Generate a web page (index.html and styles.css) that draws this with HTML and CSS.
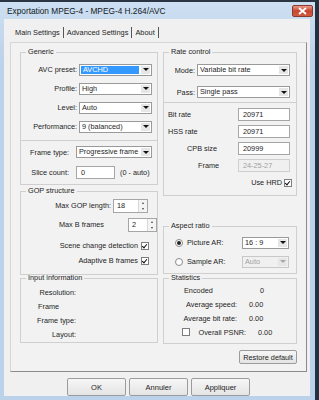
FILE: index.html
```html
<!DOCTYPE html>
<html lang="fr">
    <head>
        <meta charset="utf-8" />
        <title>Exportation MPEG-4</title>
        <link rel="stylesheet" href="styles.css">
    </head>
    <body>
        <div class="window">
            <div class="titlebar">
                <span class="title">Exportation MPEG-4 - MPEG-4 H.264/AVC</span>
                <span class="close">
                    <svg width="9" height="8" viewBox="0 0 9 8"><path d="M1 1L8 7M8 1L1 7" stroke="#fff" stroke-width="1.8"/></svg>
                </span>
            </div>
            <div class="client">
                <div class="tabs">
                    <span class="tab active">Main Settings</span>
                    <span class="tab">Advanced Settings</span>
                    <span class="tab">About</span>
                </div>
                <div class="pane">
                    <div class="cols">
                        <!-- left column -->
                        <div class="col">
                            <fieldset class="group g-generic">
                                <legend>Generic</legend>
                                <div class="row"><span class="lbl w56">AVC preset:</span><div class="combo w73 hl"><span class="val">AVCHD</span><span class="arrow"></span></div></div>
                                <div class="row"><span class="lbl w56">Profile:</span><div class="combo w73"><span class="val">High</span><span class="arrow"></span></div></div>
                                <div class="row"><span class="lbl w56">Level:</span><div class="combo w73"><span class="val">Auto</span><span class="arrow"></span></div></div>
                                <div class="row"><span class="lbl w56">Performance:</span><div class="combo w73"><span class="val">9 (balanced)</span><span class="arrow"></span></div></div>
                            </fieldset>
                            <div class="box g-frame">
                                <div class="row r20"><span class="lbl">Frame type:</span><div class="combo w75"><span class="val">Progressive frame</span><span class="arrow"></span></div></div>
                                <div class="row r20"><span class="lbl">Slice count:</span><div class="edit w39">0</div><span class="hint">(0 - auto)</span></div>
                            </div>
                            <fieldset class="group g-gop">
                                <legend>GOP structure</legend>
                                <div class="row"><span class="lbl w89">Max GOP length:</span><div class="spin"><span class="val">18</span><span class="updown"><i class="up"></i><i class="down"></i></span></div></div>
                                <div class="row"><span class="lbl w65">Max B frames</span><span class="fill"></span><div class="spin"><span class="val">2</span><span class="updown"><i class="up"></i><i class="down"></i></span></div></div>
                                <div class="row r15 first-check"><span class="lbl w114">Scene change detection</span><span class="check on"></span></div>
                                <div class="row r15"><span class="lbl w114">Adaptive B frames</span><span class="check on"></span></div>
                            </fieldset>
                            <fieldset class="group g-input">
                                <legend>Input information</legend>
                                <div class="row r14"><span class="lbl w57">Resolution:</span></div>
                                <div class="row r14"><span class="lbl w57 left">Frame</span></div>
                                <div class="row r14"><span class="lbl w57 wide">Frame type:</span></div>
                                <div class="row r14"><span class="lbl w57">Layout:</span></div>
                            </fieldset>
                        </div>

                        <!-- right column -->
                        <div class="col">
                            <fieldset class="group g-rate">
                                <legend>Rate control</legend>
                                <div class="row r20"><span class="lbl w33">Mode:</span><div class="combo w93"><span class="val">Variable bit rate</span><span class="arrow"></span></div></div>
                                <div class="row r20 gap2"><span class="lbl w33">Pass:</span><div class="combo w93"><span class="val">Single pass</span><span class="arrow"></span></div></div>
                            </fieldset>
                            <div class="box g-bits">
                                <div class="row r17"><span class="lbl plain p5">Bit rate</span><div class="edit w52">20971</div></div>
                                <div class="row r17"><span class="lbl plain p5">HSS rate</span><div class="edit w52">20971</div></div>
                                <div class="row r17"><span class="lbl plain p24">CPB size</span><div class="edit w52">20999</div></div>
                                <div class="row r17"><span class="lbl plain p35">Frame</span><div class="edit w52 off">24-25-27</div></div>
                                <div class="row r17 end"><span class="lbl plain">Use HRD</span><span class="check on"></span></div>
                            </div>
                            <fieldset class="group g-aspect">
                                <legend>Aspect ratio</legend>
                                <div class="row r19"><span class="radio on"></span><span class="lbl plain rlbl">Picture AR:</span><div class="combo w47"><span class="val">16 : 9</span><span class="arrow"></span></div></div>
                                <div class="row r19"><span class="radio"></span><span class="lbl plain rlbl">Sample AR:</span><div class="combo w47 off"><span class="val">Auto</span><span class="arrow"></span></div></div>
                            </fieldset>
                            <fieldset class="group g-stats">
                                <legend>Statistics</legend>
                                <div class="row r14"><span class="lbl plain p20 w66l">Encoded</span><span class="num">0</span></div>
                                <div class="row r14"><span class="lbl w75">Average speed:</span><span class="num">0.00</span></div>
                                <div class="row r14"><span class="lbl w75">Average bit rate:</span><span class="num">0.00</span></div>
                                <div class="row r14"><span class="check psnr"></span><span class="lbl w57 psnr-l">Overall PSNR:</span><span class="num">0.00</span></div>
                            </fieldset>
                        </div>
                    </div>
                    <div class="pane-foot">
                        <span class="btn restore">Restore default</span>
                    </div>
                </div>
                <div class="buttons">
                    <span class="btn dlg">OK</span>
                    <span class="btn dlg">Annuler</span>
                    <span class="btn dlg">Appliquer</span>
                </div>
            </div>
        </div>
    </body>
</html>
```

FILE: styles.css
```css
body {
    margin: 0;
    background: #22313f;
    font-family: "Liberation Sans", Arial, sans-serif;
    font-size: 7.3px;
    color: #1e1e1e;
}
.window {
    width: 315px;
    height: 400px;
    box-sizing: border-box;
    display: flex;
    flex-direction: column;
    padding: 0 5px 4px 4px;
    border-top: 2px solid #2a3542;
    background: linear-gradient(#cddff2, #bcd2ea 60px, #bcd2ea);
}
.titlebar {
    height: 17px;
    display: flex;
    align-items: center;
    justify-content: space-between;
    padding: 0 0 0 3px;
}
.title {
    font-size: 8.3px;
    color: #101820;
}
.close {
    width: 21px;
    height: 12px;
    margin-right: -3px;
    display: flex;
    align-items: center;
    justify-content: center;
    border: 1px solid #8a3b30;
    border-radius: 2px;
    background: linear-gradient(#e99a8c, #c8442e 50%, #d05a40);
    box-sizing: border-box;
}
.client {
    flex: 1;
    display: flex;
    flex-direction: column;
    background: #f0f0f0;
    padding: 0 3px 0 6px;
    min-height: 0;
    overflow: hidden;
}

/* tabs */
.tabs {
    height: 23px;
    display: flex;
    align-items: center;
    padding-left: 5px;
    padding-top: 4px;
    box-sizing: border-box;
}
.tab {
    padding: 0 3px;
    border-right: 1px solid #555;
    line-height: 11px;
    font-size: 7.4px;
}
.tab:first-child {
    padding-left: 0;
}

.pane {
    flex: 1;
    border: 1px solid #8c8c8c;
    border-left-color: #d6d6d6;
    border-top-color: #d6d6d6;
    background: #f2f2f2;
    padding: 0 9px;
    display: flex;
    flex-direction: column;
}
.cols {
    display: flex;
    gap: 5px;
}
.col {
    display: flex;
    flex-direction: column;
}
.col:first-child {
    width: 138px;
}
.col:last-child {
    width: 135px;
}

/* group boxes */
.group, .box {
    margin: 0;
    padding: 0;
    border: 1px solid #cfcfcf;
    box-sizing: border-box;
    min-width: 0;
}
.group > legend {
    margin-left: 5px;
    padding: 0 2px;
    line-height: 10px;
}
.g-generic { margin-top: 4px; height: 94px; padding-top: 3px; }
.g-frame { margin-top: -1px; height: 45px; padding-top: 1px; }
.g-gop { margin-top: 1px; height: 89px; }
.g-input { margin-top: -2px; height: 70px; padding-top: 2px; }
.g-rate { margin-top: 4px; height: 56px; padding-top: 3px; }
.g-bits { margin-top: -1px; height: 94px; padding-top: 3px; }
.g-aspect { margin-top: 25px; height: 53px; padding-top: 2px; }
.g-stats { margin-top: -1px; height: 71px; }

.row {
    height: 19px;
    display: flex;
    align-items: center;
    white-space: nowrap;
}
.r20 { height: 20px; }
.r19 { height: 19px; }
.r17 { height: 17px; }
.r15 { height: 15px; }
.r14 { height: 14px; }
.gap2 { margin-top: 2px; }
.first-check { margin-top: 4px; }
.end { justify-content: flex-end; padding-right: 4px; }

.lbl {
    text-align: right;
    padding-right: 2px;
    box-sizing: border-box;
    flex: none;
    white-space: nowrap;
}
.lbl.plain { text-align: left; }
.lbl.left { text-align: left; padding-left: 17px; }
.lbl.wide { margin-right: -1px; }
.w33 { width: 33px; }
.w56 { width: 58px; }
.w57 { width: 57px; }
.w65 { width: 65px; }
.w75 { width: 77px; }
.w89 { width: 92px; }
.w114 { width: 118px; }
.p5 { padding-left: 4px; width: 74px; }
.p20 { padding-left: 20px; }
.p24 { padding-left: 23px; width: 74px; }
.p35 { padding-left: 34px; width: 74px; }
.w66l { width: 86px; }
.fill { width: 27px; }

/* combo boxes */
.combo {
    height: 12px;
    display: flex;
    align-items: stretch;
    background: #fff;
    border: 1px solid #9a9a9a;
    box-sizing: border-box;
    flex: none;
}
.combo .val {
    flex: 1;
    padding-left: 2px;
    line-height: 10px;
    white-space: nowrap;
    overflow: hidden;
}
.combo.hl .val {
    background: #3399ff;
    color: #fff;
    margin: 1px;
    line-height: 8px;
}
.combo .arrow {
    width: 9px;
    margin: 1px;
    background: #e6e6e6;
    display: flex;
    align-items: center;
    justify-content: center;
}
.combo .arrow::after {
    content: "";
    border-left: 3px solid transparent;
    border-right: 3px solid transparent;
    border-top: 3px solid #111;
}
.combo.off {
    background: #f0f0f0;
    border-color: #c8c8c8;
    color: #a0a0a0;
}
.combo.off .arrow::after {
    border-top-color: #a8a8a8;
}
.w47 { width: 47px; margin-left: 16px; }
.w73 { width: 73px; }
.w75 { width: 76px; }
.w93 { width: 93px; }

/* edits */
.edit {
    height: 13px;
    line-height: 11px;
    padding-left: 4px;
    background: #fff;
    border: 1px solid #a6a6a6;
    box-sizing: border-box;
    flex: none;
}
.edit.off {
    background: #f0f0f0;
    color: #a0a0a0;
    border-color: #cfcfcf;
}
.w39 { width: 39px; }
.w52 { width: 52px; }
.hint { margin-left: 5px; }
.g-frame .lbl { width: 50px; margin-right: 5px; }

.spin {
    width: 35px;
    height: 14px;
    display: flex;
    background: #fff;
    border: 1px solid #a6a6a6;
    box-sizing: border-box;
}
.spin .val {
    flex: 1;
    padding-left: 3px;
    line-height: 12px;
}
.updown {
    width: 8px;
    display: flex;
    flex-direction: column;
    border-left: 1px solid #d8d8d8;
}
.updown i {
    flex: 1;
    display: flex;
    align-items: center;
    justify-content: center;
    background: #f4f4f4;
}
.updown i::after {
    content: "";
    border-left: 1.5px solid transparent;
    border-right: 1.5px solid transparent;
}
.updown .up::after { border-bottom: 2px solid #444; }
.updown .down::after { border-top: 2px solid #444; }
.g-gop .w65 { margin-left: 19px; width: 66px; }
.g-gop .w114 { width: 119px; }

/* checks and radios */
.check {
    width: 8px;
    height: 8px;
    background: #fff;
    border: 1px solid #7d7d7d;
    box-sizing: border-box;
    position: relative;
    flex: none;
}
.check.on::after {
    content: "";
    position: absolute;
    left: 1px;
    top: 0;
    width: 2px;
    height: 4px;
    border: solid #111;
    border-width: 0 1.3px 1.3px 0;
    transform: rotate(40deg);
}
.g-gop .check { margin-left: 1px; }
.radio {
    width: 8px;
    height: 8px;
    border-radius: 50%;
    border: 1px solid #8a8a8a;
    background: #fff;
    box-sizing: border-box;
    margin-left: 11px;
    display: flex;
    align-items: center;
    justify-content: center;
    flex: none;
}
.radio.on::after {
    content: "";
    width: 4px;
    height: 4px;
    border-radius: 50%;
    background: #222;
}
.rlbl { margin-left: 4px; width: 39px; }

.num { margin-left: 10px; }
.psnr { margin-left: 18px; }
.psnr-l { width: 58px; }
.g-stats .w75 { width: 75px; }

/* buttons */
.pane-foot {
    display: flex;
    justify-content: flex-end;
    padding-top: 6px;
}
.btn {
    display: flex;
    align-items: center;
    justify-content: center;
    border: 1px solid #9c9c9c;
    border-radius: 2px;
    background: linear-gradient(#f6f6f6, #e4e4e4);
    box-sizing: border-box;
}
.restore {
    width: 58px;
    height: 14px;
}
.buttons {
    display: flex;
    gap: 3px;
    padding-left: 57px;
    margin-top: 6px;
}
.dlg {
    width: 59px;
    height: 18px;
    font-size: 7.5px;
}
```
